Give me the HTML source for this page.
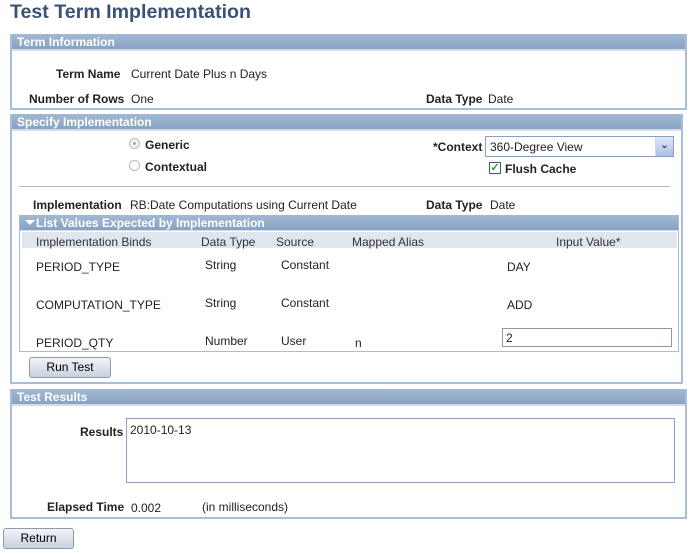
<!DOCTYPE html>
<html><head><style>
*{margin:0;padding:0;box-sizing:border-box}
body{width:696px;height:554px;background:#fff;font-family:"Liberation Sans",Arial,sans-serif;font-size:12px;color:#222;position:relative;overflow:hidden}
.a{position:absolute;white-space:nowrap}
.h1{left:10px;top:1px;font-size:19.6px;font-weight:bold;color:#3b5277}
.box{position:absolute;border:2px solid #a8bed8;border-top:none;background:#fff}
.hd{position:absolute;left:0;right:0;top:0;height:17px;background:linear-gradient(#a3b9d3,#87a2c2);color:#fff;font-weight:bold;font-size:12px;padding:1px 0 0 5px;border-bottom:2px solid #d2dcea}
.lb{font-weight:bold;text-align:right}
.btn{position:absolute;border:1px solid #8e9aab;border-radius:3px;background:linear-gradient(#f2f4f7,#c9d1dc);font-size:12px;text-align:center;line-height:18px;color:#000}
.col{position:absolute;color:#333}
</style></head><body>
<div class="a h1">Test Term Implementation</div>

<div class="box" style="left:10px;top:34px;width:677px;height:76px"><div class="hd">Term Information</div></div>
<div class="a lb" style="left:56px;top:67px">Term Name</div>
<div class="a" style="left:131px;top:67px">Current Date Plus n Days</div>
<div class="a lb" style="left:29px;top:92px">Number of Rows</div>
<div class="a" style="left:131px;top:92px">One</div>
<div class="a lb" style="left:426px;top:92px">Data Type</div>
<div class="a" style="left:488px;top:92px">Date</div>

<div class="box" style="left:10px;top:114px;width:673px;height:270px"><div class="hd">Specify Implementation</div></div>
<div class="a" style="left:129px;top:138px;width:11px;height:11px;border:1px solid #bbb;border-radius:50%;background:#f2f2f2"><div style="position:absolute;left:3px;top:3px;width:3px;height:3px;border-radius:50%;background:#aaa"></div></div>
<div class="a lb" style="left:145px;top:138px">Generic</div>
<div class="a" style="left:129px;top:160px;width:11px;height:11px;border:1px solid #bbb;border-radius:50%;background:#fafafa"></div>
<div class="a lb" style="left:145px;top:160px">Contextual</div>
<div class="a lb" style="left:433px;top:140px">*Context</div>
<div class="a" style="left:485px;top:136px;width:189px;height:21px;border:1px solid #8aa2c2;background:#fff;padding:3px 4px">360-Degree View</div>
<div class="a" style="left:655px;top:137px;width:18px;height:19px;background:linear-gradient(#e2e9f8,#aabfe6);border-left:1px solid #cfd8e8;color:#3b5277;font-size:10px;font-weight:bold;text-align:center;line-height:17px">&#8964;</div>
<div class="a" style="left:489px;top:162px;width:12px;height:12px;border:1px solid #3c5a78;background:#fff;color:#2a9a2a;font-size:11px;line-height:10px;text-align:center;font-weight:bold">&#10003;</div>
<div class="a lb" style="left:505px;top:162px">Flush Cache</div>
<div class="a" style="left:19px;top:186px;width:651px;height:1px;background:#a8bed8"></div>
<div class="a lb" style="left:33px;top:198px">Implementation</div>
<div class="a" style="left:130px;top:198px">RB:Date Computations using Current Date</div>
<div class="a lb" style="left:426px;top:198px">Data Type</div>
<div class="a" style="left:490px;top:198px">Date</div>

<div class="box" style="left:19px;top:215px;width:660px;height:137px;border-width:1px;border-top:none"><div class="hd" style="height:16px;padding-left:16px;border-bottom:1px solid #d2dcea">List Values Expected by Implementation</div>
<div class="a" style="left:5px;top:5px;width:0;height:0;border-left:5px solid transparent;border-right:5px solid transparent;border-top:5px solid #fff"></div>
<div class="a" style="left:2px;top:17px;width:655px;height:16px;background:#dfe6ee"></div></div>
<div class="col a" style="left:36px;top:235px">Implementation Binds</div>
<div class="col a" style="left:201px;top:235px">Data Type</div>
<div class="col a" style="left:276px;top:235px">Source</div>
<div class="col a" style="left:352px;top:235px">Mapped Alias</div>
<div class="col a" style="left:556px;top:235px">Input Value*</div>
<div class="a" style="left:36px;top:260px">PERIOD_TYPE</div>
<div class="a" style="left:205px;top:258px">String</div>
<div class="a" style="left:281px;top:258px">Constant</div>
<div class="a" style="left:507px;top:260px">DAY</div>
<div class="a" style="left:36px;top:298px">COMPUTATION_TYPE</div>
<div class="a" style="left:205px;top:296px">String</div>
<div class="a" style="left:281px;top:296px">Constant</div>
<div class="a" style="left:507px;top:298px">ADD</div>
<div class="a" style="left:36px;top:336px">PERIOD_QTY</div>
<div class="a" style="left:205px;top:334px">Number</div>
<div class="a" style="left:281px;top:334px">User</div>
<div class="a" style="left:355px;top:336px">n</div>
<div class="a" style="left:502px;top:328px;width:170px;height:19px;border:1px solid #8c9aa8;padding:2px 3px">2</div>
<div class="btn" style="left:29px;top:357px;width:82px;height:21px">Run Test</div>

<div class="box" style="left:10px;top:389px;width:677px;height:130px"><div class="hd">Test Results</div></div>
<div class="a lb" style="left:80px;top:425px">Results</div>
<div class="a" style="left:126px;top:418px;width:549px;height:65px;border:1px solid #8aa2c2;padding:4px 3px">2010-10-13</div>
<div class="a lb" style="left:47px;top:500px">Elapsed Time</div>
<div class="a" style="left:131px;top:501px">0.002</div>
<div class="a" style="left:202px;top:500px">(in milliseconds)</div>
<div class="btn" style="left:3px;top:528px;width:71px;height:21px">Return</div>
</body></html>
